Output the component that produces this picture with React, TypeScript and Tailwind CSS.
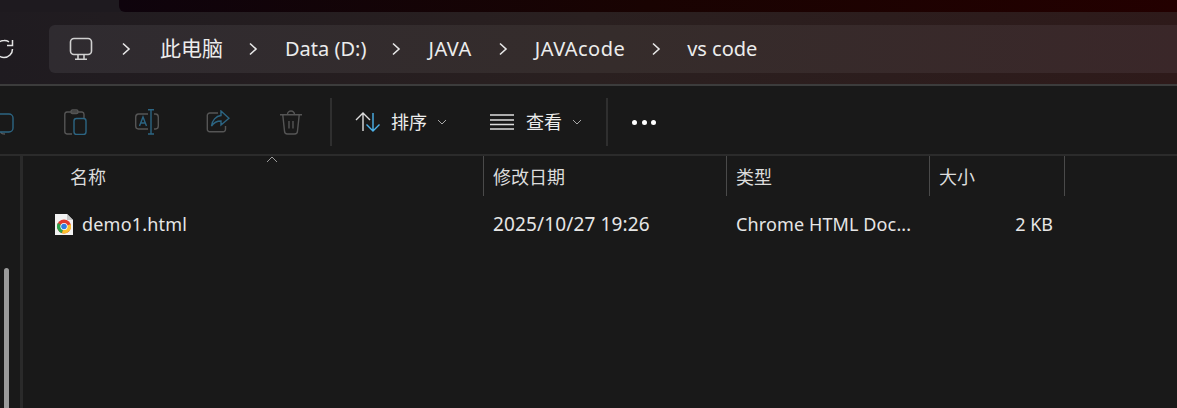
import React from "react";

const font = { fontFamily: '"Noto Sans", "Noto Sans CJK SC", sans-serif' };
const Chevron = () => (
  <svg width="10" height="14" viewBox="0 0 10 14" fill="none" stroke="#e8e8e8" strokeWidth="1.6" className="shrink-0">
    <path d="M2 1.5 L8 7 L2 12.5" />
  </svg>
);
const Down = () => (
  <svg width="10" height="6" viewBox="0 0 10 6" fill="none" stroke="#a8a8a8" strokeWidth="1" className="shrink-0">
    <path d="M1 1 L5 5 L9 1" />
  </svg>
);
const Sep = () => <div className="w-[2px] h-[48px] bg-[#2f2f2f] shrink-0" />;

function HeaderCell({ w, label, pl, arrow }: { w: string; label: string; pl: string; arrow?: boolean }) {
  return (
    <div className={`${w} ${pl} relative flex items-center h-[40px] pt-[2px] border-r border-[#4a4a4a] shrink-0 text-[18px] text-[#dcdcdc]`}>
      {label}
      {arrow && (
        <svg width="12" height="7" viewBox="0 0 12 7" fill="none" stroke="#9a9a9a" strokeWidth="1" className="absolute left-[243px] top-0">
          <path d="M1 6 L6 1 L11 6" />
        </svg>
      )}
    </div>
  );
}

export default function App() {
  return (
    <div className="w-[1177px] h-[408px] overflow-hidden bg-[#191919] flex flex-col" style={font}>
      {/* title strip */}
      <div className="h-[12px] flex bg-[#1e1a1f] shrink-0">
        <div className="w-[119px] shrink-0" />
        <div className="flex-1 rounded-bl-[6px] bg-gradient-to-r from-[#0e030c] via-[#190302] to-[#230000]" />
      </div>
      {/* address row */}
      <div className="h-[72px] shrink-0 flex items-start pt-[13px] bg-gradient-to-r from-[#1f1b20] via-[#2a2020] to-[#2e1a1a]">
        <svg width="14" height="20" viewBox="0 0 14 20" fill="none" stroke="#e4e4e4" strokeWidth="1.5" className="shrink-0 mr-[35px] mt-[14px]">
          <path d="M9 2.8 A8.5 8.5 0 0 0 4 1.5 A8.5 8.5 0 0 0 -4.5 10" />
          <path d="M12.5 10 A8.5 8.5 0 0 1 4 18.5 A8.5 8.5 0 0 1 -4.5 10" />
          <path d="M12.5 1 V6.5 H7" />
        </svg>
        <div className="h-[48px] flex-1 rounded-l-[6px] bg-gradient-to-r from-[#2f2b30] via-[#352c2b] to-[#3a2729] flex items-center text-[20px] text-[#ececec]">
          <svg width="24" height="24" viewBox="0 0 24 24" fill="none" stroke="#d0d0d0" strokeWidth="1.6" className="ml-[20px] shrink-0">
            <rect x="1.5" y="1.5" width="21" height="16" rx="3.5" />
            <path d="M9 18 V22 M15 18 V22 M6 22.2 H18" />
          </svg>
          <div className="ml-[28px]"><Chevron /></div>
          <span className="ml-[29px] text-[21px]">此电脑</span>
          <div className="ml-[25px]"><Chevron /></div>
          <span className="ml-[27px]">Data (D:)</span>
          <div className="ml-[25px]"><Chevron /></div>
          <span className="ml-[27px] tracking-[0.5px]">JAVA</span>
          <div className="ml-[26px]"><Chevron /></div>
          <span className="ml-[27px] tracking-[0.45px]">JAVAcode</span>
          <div className="ml-[26px]"><Chevron /></div>
          <span className="ml-[26px]">vs code</span>
        </div>
      </div>
      <div className="h-[2px] bg-[#3c3c3c] shrink-0" />
      {/* toolbar */}
      <div className="h-[70px] pt-[4px] shrink-0 flex items-center bg-[#191919] border-b-2 border-[#2b2b2b] text-[#ececec] text-[18px]">
        <svg width="14" height="26" viewBox="0 0 14 26" fill="none" strokeWidth="1.4" className="shrink-0">
          <path d="M1 23 C1 25 3 25 5 25" stroke="#555555" />
          <rect x="-5" y="5" width="18" height="18" rx="4" stroke="#2c6583" />
        </svg>
        <svg width="24" height="26" viewBox="0 0 24 26" fill="none" strokeWidth="1.4" className="ml-[50px] shrink-0">
          <path d="M8 25 H3 A2.5 2.5 0 0 1 0.8 22.5 V5.5 A2.5 2.5 0 0 1 3 3 H18 A2.5 2.5 0 0 1 20 5.5 V9" stroke="#555555" />
          <rect x="7" y="1" width="7" height="3.5" rx="1.5" stroke="#555555" />
          <rect x="10" y="9.5" width="12" height="16" rx="2.5" stroke="#2c6583" />
        </svg>
        <svg width="24" height="26" viewBox="0 0 24 26" fill="none" strokeWidth="1.4" className="ml-[47px] shrink-0">
          <path d="M13 5 H3.5 A3 3 0 0 0 0.7 8 V17 A3 3 0 0 0 3.5 20 H13 M19 5 H20.5 A3 3 0 0 1 23.3 8 V17 A3 3 0 0 1 20.5 20 H19" stroke="#555555" />
          <path d="M4.5 17 L8 8 L11.5 17 M5.8 14 H10.2" stroke="#2c6583" />
          <path d="M16 0.8 V25 M13 0.8 H19 M13 25 H19" stroke="#2c6583" />
        </svg>
        <svg width="24" height="24" viewBox="0 0 24 24" fill="none" strokeWidth="1.4" className="ml-[47px] shrink-0">
          <path d="M12 3 H4 A2.5 2.5 0 0 0 1.3 5.5 V19 A2.5 2.5 0 0 0 4 21.8 H17 A2.5 2.5 0 0 0 19.5 19 V16" stroke="#555555" />
          <path d="M15 1 L23 8.2 L15 15 V11 C10 11 7.5 13 5.5 16 C6 10.5 10 6 15 5.5 Z" stroke="#2c6583" />
        </svg>
        <svg width="22" height="25" viewBox="0 0 22 25" fill="none" stroke="#555555" strokeWidth="1.4" className="ml-[50px] shrink-0">
          <path d="M0 4.8 H22 M7.5 4.5 A3.5 3.5 0 0 1 14.5 4.5 M2.8 5 L4.5 21 A3 3 0 0 0 7.5 24 H14.5 A3 3 0 0 0 17.5 21 L19.2 5 M9 11 V18.5 M13 11 V18.5" />
        </svg>
        <div className="ml-[28px]"><Sep /></div>
        <svg width="26" height="20" viewBox="0 0 26 20" fill="none" strokeWidth="1.4" className="ml-[23px] shrink-0">
          <path d="M8 19 V1 M1 8 L8 1 L15 8" stroke="#dddddd" />
          <path d="M18 1 V19 M11.5 12.5 L18 19 L24.5 12.5" stroke="#4cb2ea" />
        </svg>
        <span className="ml-[10px]">排序</span>
        <div className="ml-[10px]"><Down /></div>
        <svg width="24" height="16" viewBox="0 0 24 16" fill="none" stroke="#dddddd" strokeWidth="1.3" className="ml-[43px] shrink-0">
          <path d="M0 1 H24 M0 6 H24 M0 10.5 H24 M0 15 H24" />
        </svg>
        <span className="ml-[12px]">查看</span>
        <div className="ml-[10px]"><Down /></div>
        <div className="ml-[24px]"><Sep /></div>
        <div className="ml-[24px] flex gap-[4.5px]">
          <div className="w-[5px] h-[5px] rounded-full bg-white" />
          <div className="w-[5px] h-[5px] rounded-full bg-white" />
          <div className="w-[5px] h-[5px] rounded-full bg-white" />
        </div>
      </div>
      {/* content */}
      <div className="flex-1 flex min-h-0">
        <div className="w-[20px] shrink-0 relative">
          <div className="absolute left-[4px] top-[112px] bottom-0 w-[5px] rounded-t-[3px] bg-[#9b9b9b]" />
        </div>
        <div className="w-[3px] shrink-0 bg-[#2a2a2a]" />
        <div className="flex-1 flex flex-col">
          <div className="flex">
            <HeaderCell w="w-[461px]" pl="pl-[47px]" label="名称" arrow />
            <HeaderCell w="w-[243px]" pl="pl-[9px]" label="修改日期" />
            <HeaderCell w="w-[203px]" pl="pl-[9px]" label="类型" />
            <HeaderCell w="w-[135px]" pl="pl-[9px]" label="大小" />
          </div>
          <div className="flex items-center h-[56px] text-[18px] text-[#e6e6e6]">
            <div className="w-[461px] shrink-0 pl-[32px] flex items-center">
              <svg width="18" height="21" viewBox="0 0 18 21" className="shrink-0">
                <path d="M0 0 H12 L18 6 V21 H0 Z" fill="#f2f2f2" />
                <path d="M12 0 L18 6 H12 Z" fill="#c8c8c8" />
                <circle cx="9" cy="12.5" r="7" fill="#e33b2e" />
                <path d="M9 12.5 L2.9 9 A7 7 0 0 0 7 19.2 Z" fill="#2ba24c" />
                <path d="M9 12.5 L15.6 10.2 A7 7 0 0 1 7 19.2 Z" fill="#fbc02d" />
                <circle cx="9" cy="12.5" r="3.6" fill="#ffffff" />
                <circle cx="9" cy="12.5" r="2.8" fill="#2f7de1" />
              </svg>
              <span className="ml-[9px] tracking-[0.2px]">demo1.html</span>
            </div>
            <div className="w-[243px] shrink-0 pl-[9px] text-[19px] tracking-[0.14px]">2025/10/27 19:26</div>
            <div className="w-[203px] shrink-0 pl-[9px] whitespace-nowrap tracking-[0.12px]">Chrome HTML Doc...</div>
            <div className="w-[123px] shrink-0 text-right">2 KB</div>
          </div>
        </div>
      </div>
    </div>
  );
}
